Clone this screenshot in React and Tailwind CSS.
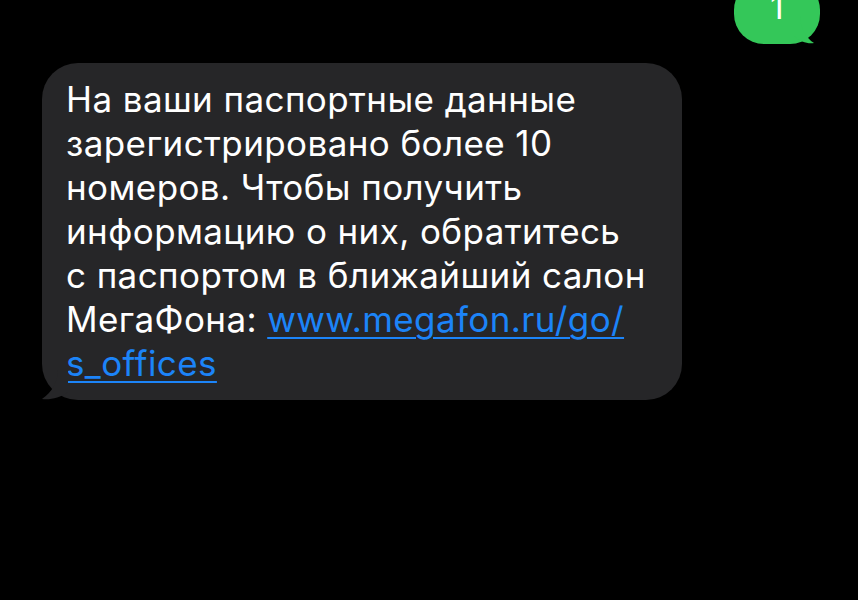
import React from 'react'

const lines = [
  'На ваши паспортные данные',
  'зарегистрировано более 10',
  'номеров. Чтобы получить',
  'информацию о них, обратитесь',
  'с паспортом в ближайший салон',
]

function IncomingBubble() {
  return (
    <div className="relative ml-[42px] mt-[19px] w-[640px] rounded-[36px] bg-[#262628] px-[24px] pt-[14px] pb-[15px] text-[35px] leading-[44px] tracking-[0.4px] text-white">
      {lines.map((l, i) => (
        <div key={i}>{l}</div>
      ))}
      <div>
        МегаФона:{' '}
        <a href="#" className="text-[#1c84f8] underline decoration-[2px] underline-offset-[5px]">
          www.megafon.ru/go/
        </a>
      </div>
      <div>
        <a href="#" className="text-[#1c84f8] underline decoration-[2px] underline-offset-[5px]">
          s_offices
        </a>
      </div>
      {/* tail */}
      <svg className="absolute bottom-0 left-[-14px]" width="40" height="30" viewBox="0 0 40 30">
        <path d="M30 0 C30 12 24 22 14 29 C22 30 32 28 40 22 L40 0 Z" fill="#262628" />
      </svg>
    </div>
  )
}

function SentBubble() {
  return (
    <div className="flex justify-end pr-[38px]">
      <div className="relative -mt-[20px] h-[64px] w-[86px] rounded-[30px] bg-[#34c759] pt-[7px] text-center text-[33px] leading-[40px] text-white">
        <div>1</div>
        <svg className="absolute bottom-0 right-[-10px]" width="36" height="28" viewBox="0 0 36 28">
          <path d="M6 0 C6 12 12 22 20 27 C14 28 6 26 0 20 L0 0 Z" fill="#34c759" />
        </svg>
      </div>
    </div>
  )
}

export default function App() {
  return (
    <div className="h-[600px] w-[858px] overflow-hidden bg-black" style={{ fontFamily: 'Inter, "Noto Sans", sans-serif' }}>
      <SentBubble />
      <IncomingBubble />
    </div>
  )
}
